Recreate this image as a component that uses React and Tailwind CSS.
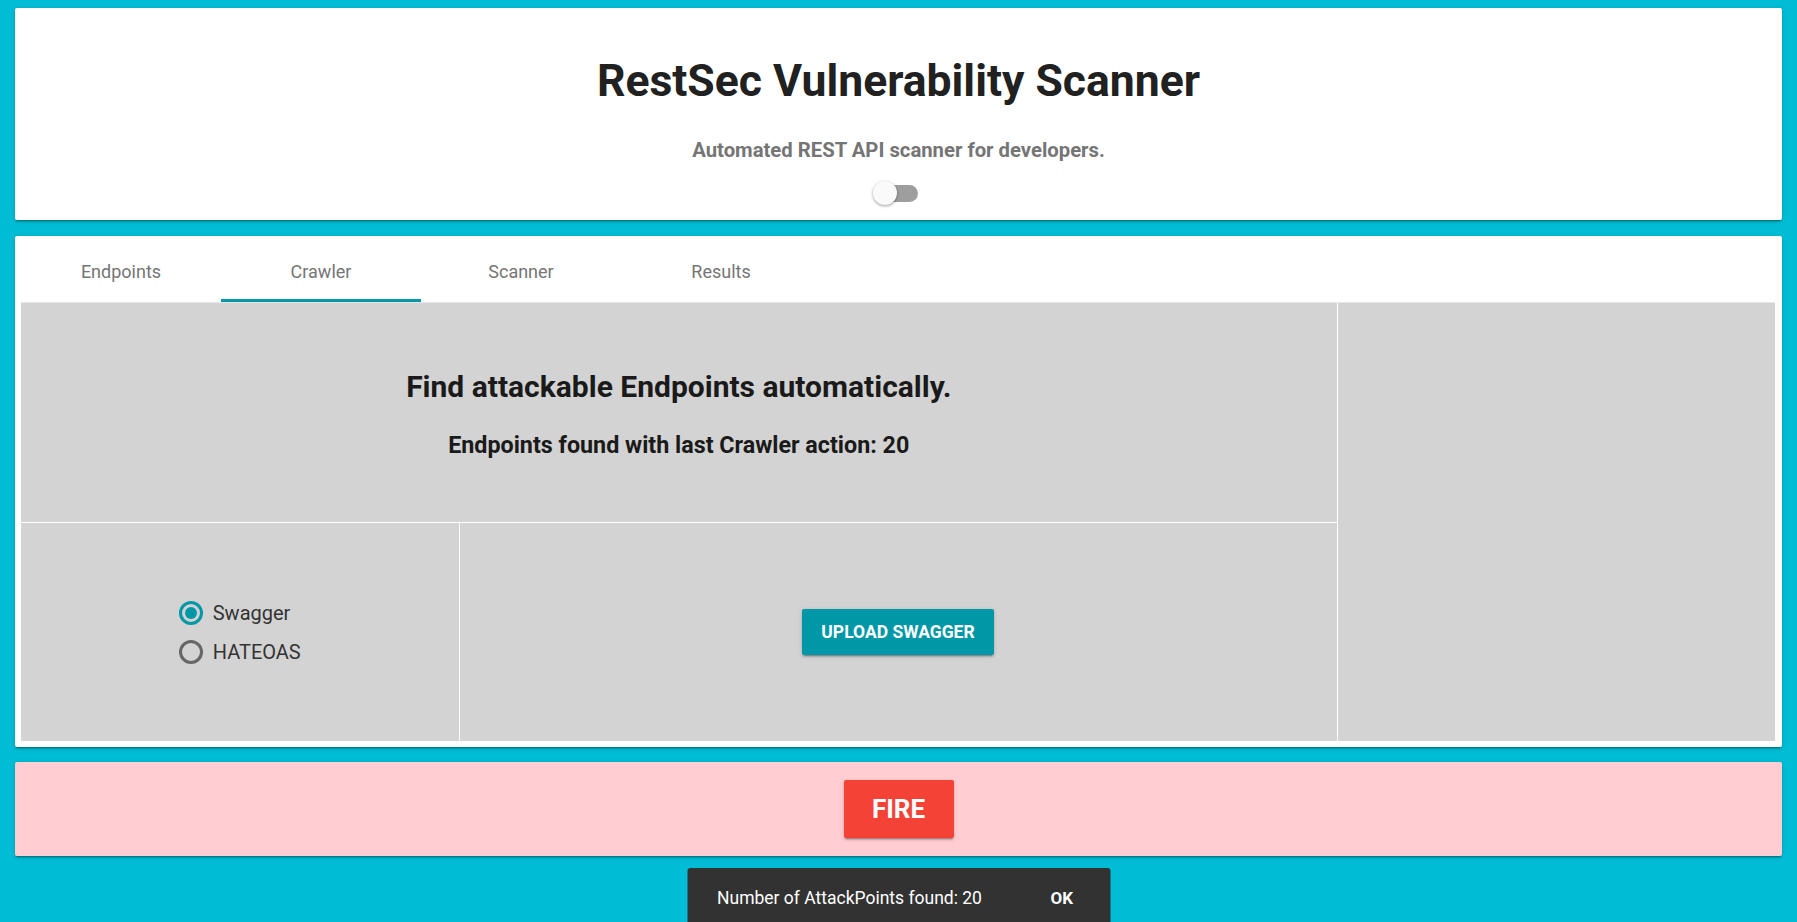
import React from "react";

function Tab({ label, active }) {
  return (
    <div className="relative w-[200px] h-[66px] flex items-center justify-center pt-[4px] text-[18px] text-[#757575]">
      {label}
      {active && <div className="absolute left-0 right-0 bottom-0 h-[3px] bg-[#0097a7]" />}
    </div>
  );
}

function Radio({ label, checked }) {
  return (
    <div className="flex items-center h-[39px]">
      <div
        className={
          checked
            ? "w-[24px] h-[24px] rounded-full border-[3px] border-[#0097a7] flex items-center justify-center"
            : "w-[24px] h-[24px] rounded-full border-[3px] border-[#666666] flex items-center justify-center"
        }
      >
        {checked && <div className="w-[12px] h-[12px] rounded-full bg-[#0097a7]" />}
      </div>
      <span className="ml-[10px] text-[20px] text-[#333333]">{label}</span>
    </div>
  );
}

export default function App() {
  const cardShadow =
    "shadow-[0_2px_2px_0_rgba(0,0,0,0.14),0_3px_1px_-2px_rgba(0,0,0,0.2),0_1px_5px_0_rgba(0,0,0,0.12)]";
  return (
    <div className="min-h-screen bg-[#00bcd4] px-[15px] pt-[8px] pb-[80px] font-[Roboto,sans-serif] overflow-hidden">
      {/* Header card */}
      <div className={`bg-white rounded-[2px] ${cardShadow} flex flex-col items-center pt-[47px] pb-[15px]`}>
        <h1 className="text-[44.5px] leading-[53px] font-bold text-[#212121]">RestSec Vulnerability Scanner</h1>
        <p className="mt-[31px] text-[20.3px] leading-[23px] font-bold text-[#757575]">
          Automated REST API scanner for developers.
        </p>
        <div className="mt-[19px] mr-[2px] relative w-[40px] h-[24px] flex items-center">
          <div className="w-[40px] h-[17px] rounded-full bg-[#9e9e9e]" />
          <div className="absolute left-[-5px] top-0 w-[24px] h-[24px] rounded-full bg-[#fafafa] shadow-[0_1px_3px_rgba(0,0,0,0.4)]" />
        </div>
      </div>

      {/* Tabs card */}
      <div className={`mt-[16px] bg-white rounded-[2px] ${cardShadow} px-[6px] pb-[6px] pr-[7px]`}>
        <div className="flex">
          <Tab label="Endpoints" />
          <Tab label="Crawler" active />
          <Tab label="Scanner" />
          <Tab label="Results" />
        </div>
        <div className="flex bg-[#d3d3d3] border-t border-[#e6e6e6] h-[439px]">
          <div className="w-3/4 flex flex-col">
            <div className="h-[220px] border-b border-white flex flex-col items-center pt-[66px]">
              <h3 className="text-[30px] leading-[36px] font-bold text-[#1a1a1a]">
                Find attackable Endpoints automatically.
              </h3>
              <h5 className="mt-[27px] text-[23.3px] leading-[27px] font-bold text-[#1a1a1a]">
                Endpoints found with last Crawler action: 20
              </h5>
            </div>
            <div className="flex-1 flex">
              <div className="w-1/3 border-r border-white flex items-center justify-center">
                <div className="flex flex-col">
                  <Radio label="Swagger" checked />
                  <Radio label="HATEOAS" />
                </div>
              </div>
              <div className="w-2/3 flex items-center justify-center">
                <button className="w-[192px] h-[46px] rounded-[2px] bg-[#0097a7] text-white text-[17.5px] font-bold uppercase shadow-[0_2px_2px_0_rgba(0,0,0,0.14),0_3px_1px_-2px_rgba(0,0,0,0.2),0_1px_5px_0_rgba(0,0,0,0.12)]">
                  Upload Swagger
                </button>
              </div>
            </div>
          </div>
          <div className="w-1/4 border-l border-white" />
        </div>
      </div>

      {/* Fire card */}
      <div className={`mt-[15px] bg-[#ffcdd2] rounded-[2px] ${cardShadow} h-[94px] flex items-center justify-center`}>
        <button className="w-[110px] h-[58px] rounded-[2px] bg-[#f44336] text-white text-[26px] font-bold shadow-[0_2px_2px_0_rgba(0,0,0,0.14),0_3px_1px_-2px_rgba(0,0,0,0.2),0_1px_5px_0_rgba(0,0,0,0.12)]">
          FIRE
        </button>
      </div>

      {/* Snackbar */}
      <div className="fixed left-1/2 -translate-x-1/2 bottom-[-8px] w-[423px] h-[62px] bg-[#323232] rounded-t-[3px] flex items-center justify-between pl-[30px] pr-[37px] pb-[1px]">
        <span className="text-[17.5px] text-white">Number of AttackPoints found: 20</span>
        <span className="text-[17px] font-bold text-white">OK</span>
      </div>
    </div>
  );
}
